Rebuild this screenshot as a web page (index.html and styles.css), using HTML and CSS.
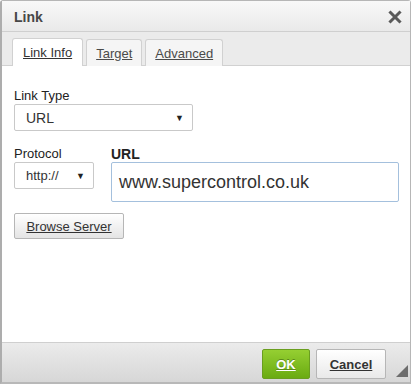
FILE: index.html
```html
<!DOCTYPE html>
<html lang="en">
<head>
  <meta charset="UTF-8" />
  <title>Link</title>
  <link rel="stylesheet" href="styles.css">
</head>
<body>
  <div class="dialog">
    <div class="dialog-title">
      <span>Link</span>
      <svg class="close" width="14" height="14" viewBox="0 0 14 14">
        <path d="M2.5 2.5 L11.5 11.5 M11.5 2.5 L2.5 11.5" stroke="#5a5a5a" stroke-width="3" stroke-linecap="square"/>
      </svg>
    </div>

    <div class="tabs">
      <a class="tab active" href="#">Link Info</a>
      <a class="tab" href="#">Target</a>
      <a class="tab" href="#">Advanced</a>
    </div>

    <div class="dialog-body">
      <label class="field-label">Link Type</label>
      <div class="select select-type">
        <span>URL</span>
        <span class="arrow">&#9660;</span>
      </div>

      <div class="url-row">
        <div class="protocol">
          <label class="field-label">Protocol</label>
          <div class="select select-protocol">
            <span>http://</span>
            <span class="arrow">&#9660;</span>
          </div>
        </div>
        <div class="url">
          <label class="field-label bold">URL</label>
          <div class="url-input">www.supercontrol.co.uk</div>
        </div>
      </div>

      <a class="btn browse" href="#">Browse Server</a>
    </div>

    <div class="dialog-footer">
      <a class="btn ok" href="#">OK</a>
      <a class="btn cancel" href="#">Cancel</a>
      <span class="grip"></span>
    </div>
  </div>
</body>
</html>
```

FILE: styles.css
```css
* {
  margin: 0;
  padding: 0;
  box-sizing: border-box;
}

body {
  font-family: 'Liberation Sans', Arial, sans-serif;
  background: #fff;
  color: #333;
  width: 411px;
  height: 386px;
  overflow: hidden;
}

.dialog {
  width: 411px;
  border: 1px solid #b6b6b6;
  border-left: 2px solid #adadad;
  border-radius: 3px 3px 0 0;
  border-bottom: 2px solid #b8b8b8;
  background: #fff;
}

.dialog-title {
  height: 31px;
  display: flex;
  align-items: center;
  justify-content: space-between;
  padding: 2px 8px 0 12px;
  background: linear-gradient(#f8f8f8, #e9e9e9);
  border-bottom: 1px solid #cfcfcf;
  font-size: 14px;
  font-weight: bold;
  color: #474747;
}

.close {
  display: block;
}

.tabs {
  display: flex;
  gap: 3px;
  height: 34px;
  padding: 6px 0 0 10px;
  background: #ebebeb;
  border-bottom: 1px solid #d1d1d1;
}

.tab {
  display: flex;
  align-items: center;
  height: 27px;
  margin-top: 1px;
  padding: 0 9px;
  background: #f5f5f5;
  border: 1px solid #d1d1d1;
  border-bottom: none;
  border-radius: 3px 3px 0 0;
  font-size: 13px;
  color: #4a4a4a;
  text-decoration: underline;
}

.tab.active {
  height: 28px;
  margin-top: 0;
  padding: 0 10px;
  background: #fff;
  color: #333;
}

.dialog-body {
  height: 276px;
  padding: 22px 12px 0;
}

.field-label {
  display: block;
  font-size: 13px;
  line-height: 16px;
  color: #222;
}

.field-label.bold {
  font-weight: bold;
  font-size: 14px;
}

.select {
  display: flex;
  align-items: center;
  justify-content: space-between;
  height: 27px;
  padding: 0 8px 0 11px;
  border: 1px solid #c9c9c9;
  border-radius: 2px;
  background: #fff;
  font-size: 14px;
  color: #333;
}

.select-type {
  width: 179px;
}

.select-protocol {
  width: 80px;
  font-size: 13px;
}

.arrow {
  font-size: 9px;
  color: #222;
}

.url-row {
  display: flex;
  gap: 17px;
  margin-top: 15px;
}

.url-input {
  width: 288px;
  height: 40px;
  padding: 0 7px;
  display: flex;
  align-items: center;
  border: 1px solid #a4c0dd;
  border-radius: 2px;
  font-size: 18px;
  color: #333;
}

.btn {
  display: inline-flex;
  align-items: center;
  justify-content: center;
  border-radius: 2px;
  font-size: 13px;
  color: #333;
  text-decoration: underline;
}

.browse {
  margin-top: 11px;
  width: 110px;
  height: 26px;
  border: 1px solid #b6b6b6;
  background: linear-gradient(#fff, #e4e4e4);
}

.dialog-footer {
  position: relative;
  display: flex;
  justify-content: flex-end;
  gap: 6px;
  height: 40px;
  padding: 6px 24px 0 0;
  background: linear-gradient(#ebebeb, #d7d7d7);
  border-top: 1px solid #cfcfcf;
}

.ok {
  width: 48px;
  height: 30px;
  border: 1px solid #6a9e1f;
  background: linear-gradient(#95cf32, #6aab11);
  color: #fff;
  font-weight: bold;
  text-shadow: 0 -1px 0 #5b8a1a;
}

.cancel {
  width: 70px;
  height: 30px;
  border: 1px solid #b6b6b6;
  background: linear-gradient(#fff, #e9e9e9);
  font-weight: bold;
}

/* resize grip */
.grip {
  position: absolute;
  right: 2px;
  bottom: 5px;
  width: 0;
  height: 0;
  border-left: 12px solid transparent;
  border-bottom: 12px solid #6d6d6d;
}
```
